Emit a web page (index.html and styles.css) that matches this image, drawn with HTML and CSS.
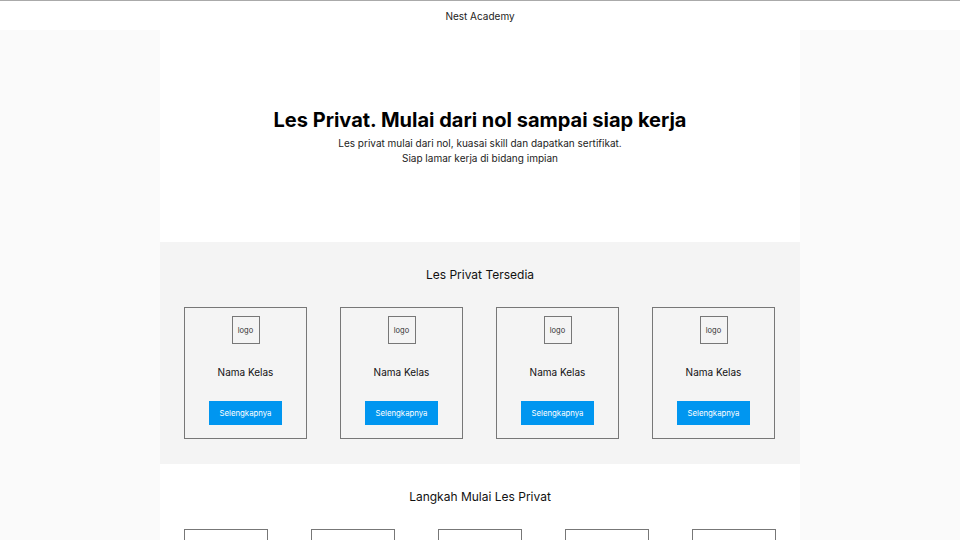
FILE: index.html
```html
<!DOCTYPE html>
<html lang="id">
<head>
    <meta charset="UTF-8">
    <meta name="viewport" content="width=device-width, initial-scale=1.0">
    <title>Nest Academy</title>
    <link rel="stylesheet" href="styles.css">
</head>
<body>
    <header class="topbar">
        <span class="brand">Nest Academy</span>
    </header>

    <div class="main">
        <section class="hero">
            <h1>Les Privat. Mulai dari nol sampai siap kerja</h1>
            <p>Les privat mulai dari nol, kuasai skill dan dapatkan sertifikat.<br>Siap lamar kerja di bidang impian</p>
        </section>

        <section class="section section-grey">
            <h2>Les Privat Tersedia</h2>
            <div class="class-list">
                <div class="class-card">
                    <div class="logo">logo</div>
                    <div class="class-name">Nama Kelas</div>
                    <a href="#" class="more-btn">Selengkapnya</a>
                </div>
                <div class="class-card">
                    <div class="logo">logo</div>
                    <div class="class-name">Nama Kelas</div>
                    <a href="#" class="more-btn">Selengkapnya</a>
                </div>
                <div class="class-card">
                    <div class="logo">logo</div>
                    <div class="class-name">Nama Kelas</div>
                    <a href="#" class="more-btn">Selengkapnya</a>
                </div>
                <div class="class-card">
                    <div class="logo">logo</div>
                    <div class="class-name">Nama Kelas</div>
                    <a href="#" class="more-btn">Selengkapnya</a>
                </div>
            </div>
        </section>

        <section class="section">
            <h2>Langkah Mulai Les Privat</h2>
            <div class="step-list">
                <div class="step"></div>
                <div class="step"></div>
                <div class="step"></div>
                <div class="step"></div>
                <div class="step"></div>
            </div>
        </section>
    </div>
</body>
</html>
```

FILE: styles.css
```css
* {
    margin: 0;
    padding: 0;
    box-sizing: border-box;
    font-family: 'Inter', 'Noto Sans', sans-serif;
}

body {
    background: #fafafa;
    color: #111;
}

.topbar {
    height: 30px;
    border-top: 1px solid #aaaaaa;
    background: #ffffff;
    display: flex;
    justify-content: center;
    align-items: center;
}

.brand {
    font-size: 10px;
    color: #222;
}

.main {
    width: 640px;
    margin: 0 auto;
    background: #ffffff;
}

.hero {
    height: 212px;
    display: flex;
    flex-direction: column;
    justify-content: center;
    align-items: center;
    text-align: center;
    padding-top: 2px;
}

.hero h1 {
    font-size: 20px;
    font-weight: 700;
    line-height: 24px;
    color: #000;
    margin-bottom: 4px;
}

.hero p {
    font-size: 10px;
    line-height: 15px;
    color: #222;
}

.section {
    padding: 24px 24px 25px;
}

.section-grey {
    background: #f4f4f4;
}

.section h2 {
    font-size: 12px;
    font-weight: 400;
    line-height: 18px;
    text-align: center;
    color: #111;
    margin-bottom: 23px;
}

.class-list {
    display: flex;
    justify-content: space-between;
    margin-right: 1px;
}

.class-card {
    width: 123px;
    height: 132px;
    border: 1px solid #777;
    display: flex;
    flex-direction: column;
    align-items: center;
    padding-top: 8px;
}

.logo {
    width: 28px;
    height: 28px;
    border: 1px solid #777;
    font-size: 7.5px;
    color: #333;
    display: flex;
    justify-content: center;
    align-items: center;
}

.class-name {
    margin-top: 21px;
    font-size: 10px;
    line-height: 14px;
    color: #111;
}

.more-btn {
    margin-top: 22px;
    width: 73px;
    height: 24px;
    background: #0096f0;
    color: #ffffff;
    font-size: 7.8px;
    text-decoration: none;
    display: flex;
    justify-content: center;
    align-items: center;
}

.step-list {
    display: flex;
    justify-content: space-between;
}

.step {
    width: 84px;
    height: 100px;
    border: 1px solid #777;
}
```
